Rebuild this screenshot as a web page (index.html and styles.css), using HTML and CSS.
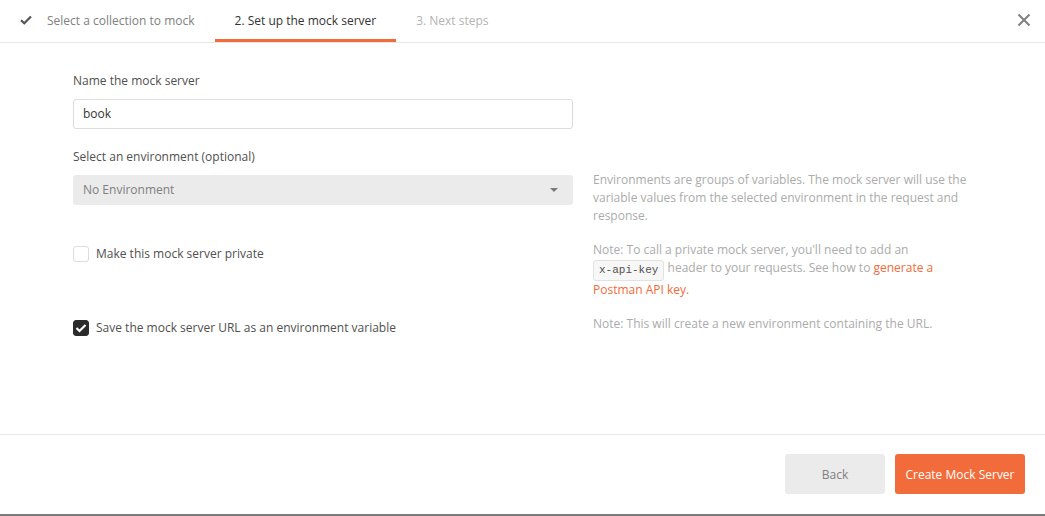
FILE: index.html
```html
<!DOCTYPE html>
<html>
<head>
<meta charset="utf-8">
<link rel="stylesheet" href="styles.css">
</head>
<body>
<div class="modal">
  <div class="header">
    <div class="tabs">
      <div class="tab done">
        <svg class="tick" width="12" height="10" viewBox="0 0 12 10"><path d="M1 5.2 L4.3 8.3 L11 1.5" fill="none" stroke="#555" stroke-width="2.2"/></svg>
        <span>Select a collection to mock</span>
      </div>
      <div class="tab active"><span>2. Set up the mock server</span></div>
      <div class="tab pending"><span>3. Next steps</span></div>
    </div>
    <div class="close">
      <svg width="14" height="14" viewBox="0 0 14 14"><path d="M1.5 1.5 L12.5 12.5 M12.5 1.5 L1.5 12.5" stroke="#7f7f7f" stroke-width="2"/></svg>
    </div>
  </div>

  <div class="main">
    <div class="form">
      <div class="label first">Name the mock server</div>
      <div class="input">book</div>

      <div class="label second">Select an environment (optional)</div>
      <div class="select-row">
        <div class="select">
          <span>No Environment</span>
          <span class="caret"></span>
        </div>
        <div class="help">Environments are groups of variables. The mock server will use the variable values from the selected environment in the request and response.</div>
      </div>

      <div class="check-row private">
        <label class="check"><span class="box"></span><span>Make this mock server private</span></label>
        <div class="help">Note: To call a private mock server, you'll need to add an <code class="chip">x-api-key</code> header to your requests. See how to <a class="link">generate a Postman API key.</a></div>
      </div>

      <div class="check-row save">
        <label class="check"><span class="box checked"><svg width="12" height="10" viewBox="0 0 12 10"><path d="M1.5 5 L4.5 8 L10.5 2" fill="none" stroke="#fff" stroke-width="2.2"/></svg></span><span>Save the mock server URL as an environment variable</span></label>
        <div class="help">Note: This will create a new environment containing the URL.</div>
      </div>
    </div>
  </div>

  <div class="footer">
    <button class="btn back">Back</button>
    <button class="btn primary">Create Mock Server</button>
  </div>
</div>
</body>
</html>
```

FILE: styles.css
```css
* { box-sizing: border-box; }
html, body { margin: 0; padding: 0; background: #fff; }
body {
  font-family: "Open Sans", "Liberation Sans", sans-serif;
  font-size: 12px;
  color: #505050;
}
.modal {
  width: 1045px;
  height: 516px;
  display: flex;
  flex-direction: column;
  border-bottom: 2px solid #7a7a7a;
}
.header {
  height: 43px;
  border-bottom: 1px solid #e6e6e6;
  display: flex;
  justify-content: space-between;
  align-items: flex-start;
}
.tabs { display: flex; height: 42px; }
.tab {
  height: 42px;
  padding: 0 20px;
  display: flex;
  align-items: center;
  gap: 15px;
  border-bottom: 3px solid transparent;
  line-height: 18px;
}
.tab span { position: relative; top: 1px; }
.tab.done { color: #808080; }
.tab.active { color: #333; border-bottom-color: #f26b3a; }
.tab.pending { color: #b3b3b3; }
.tick { flex: none; }
.close {
  width: 14px;
  height: 14px;
  margin: 13px 14px 0 0;
  display: flex;
}
.main { flex: 1; padding: 0 73px; }
.form { width: 910px; }
.label { line-height: 18px; color: #505050; }
.label.first { margin-top: 29px; }
.label.second { margin-top: 19px; }
.input {
  width: 500px;
  height: 30px;
  margin-top: 9px;
  border: 1px solid #dcdcdc;
  border-radius: 3px;
  padding: 0 9px;
  line-height: 28px;
  color: #333;
}
.select-row, .check-row {
  display: grid;
  grid-template-columns: 500px 380px;
  column-gap: 20px;
  align-items: start;
}
.select-row { margin-top: 9px; }
.select {
  height: 30px;
  background: #ebebeb;
  border-radius: 3px;
  padding: 0 10px;
  display: flex;
  align-items: center;
  justify-content: space-between;
  color: #808080;
}
.select span:first-child { position: relative; top: -1px; }
.caret {
  width: 0; height: 0;
  border-left: 4px solid transparent;
  border-right: 4px solid transparent;
  border-top: 4px solid #7a7a7a;
  margin-right: 5px;
}
.help {
  line-height: 18px;
  color: #ababab;
}
.select-row .help { margin-top: -4px; }
.check-row.private { margin-top: 16px; }
.check-row.save { margin-top: 16px; }
.check {
  display: flex;
  align-items: center;
  gap: 7px;
  margin-top: 5px;
  line-height: 16px;
  color: #505050;
}
.box {
  width: 16px;
  height: 16px;
  border: 1px solid #dcdcdc;
  border-radius: 3px;
  background: #fff;
  display: flex;
  align-items: center;
  justify-content: center;
  flex: none;
}
.box.checked { background: #2b2b2b; border-color: #2b2b2b; }
.chip {
  font-family: "Liberation Mono", "DejaVu Sans Mono", monospace;
  font-size: 11px;
  color: #505050;
  background: #f7f7f7;
  border: 1px solid #e2e2e2;
  border-radius: 3px;
  padding: 3px 5px 3px;
  display: inline-block;
  line-height: 13px;
  vertical-align: -1px;
}
.link { color: #f26b3a; text-decoration: none; }
.footer {
  border-top: 1px solid #e6e6e6;
  padding: 19px 20px 20px;
  display: flex;
  justify-content: flex-end;
  gap: 10px;
}
.btn {
  font-family: "Open Sans", "Liberation Sans", sans-serif;
  font-size: 12px;
  height: 40px;
  border: none;
  border-radius: 3px;
  padding: 0 8px;
  white-space: nowrap;
}
.btn.back { width: 100px; background: #ebebeb; color: #808080; }
.btn.primary { width: 130px; background: #f26b3a; color: #fff; }
```
